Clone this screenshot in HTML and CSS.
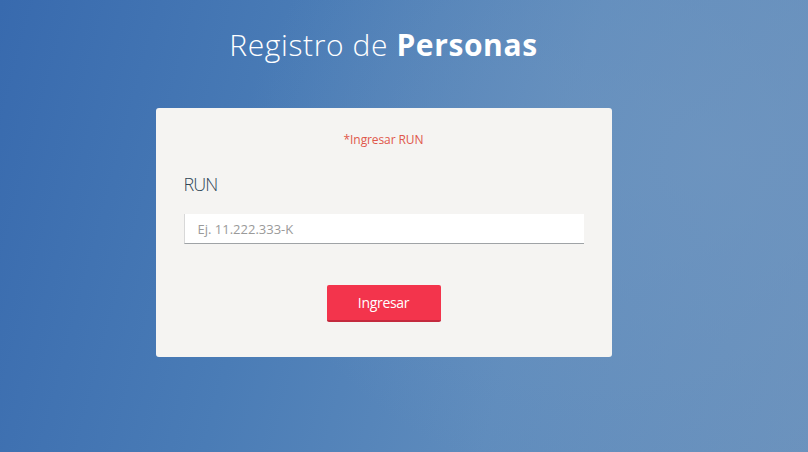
FILE: index.html
```html
<!DOCTYPE html>
<html lang="es">
<head>
    <meta charset="UTF-8">
    <meta name="viewport" content="width=device-width, initial-scale=1.0">
    <title>Registro de Personas</title>
    <link rel="stylesheet" href="styles.css">
</head>
<body>
    <div class="page">
        <h1 class="title">Registro de <strong>Personas</strong></h1>
        <form class="card">
            <p class="error">*Ingresar RUN</p>
            <label class="label" for="run">RUN</label>
            <input class="input" id="run" type="text" placeholder="Ej. 11.222.333-K">
            <div class="actions">
                <button class="btn" type="button">Ingresar</button>
            </div>
        </form>
    </div>
</body>
</html>
```
FILE: styles.css
```css
html, body {
    margin: 0;
    height: 100%;
}
body {
    font-family: "Open Sans", "Noto Sans", sans-serif;
    background:
        radial-gradient(ellipse 60% 80% at 90% 35%, rgba(112, 150, 192, 0.7) 0%, rgba(112, 150, 192, 0) 100%),
        linear-gradient(105deg, #386aae 0%, #4a7cb6 35%, #5f8cbd 65%, #6b92bd 100%);
    overflow: hidden;
}
.page {
    display: flex;
    flex-direction: column;
    align-items: center;
    padding: 25px 41px 0 0;
}
.title {
    margin: 0 0 43px;
    font-size: 30px;
    font-weight: 300;
    line-height: 40px;
    color: #fff;
    letter-spacing: 0.6px;
}
.title strong {
    font-weight: 700;
    letter-spacing: 0.6px;
}
.card {
    width: 456px;
    height: 249px;
    box-sizing: border-box;
    background: #f5f4f2;
    border-radius: 3px;
    padding: 24px 28px 0;
    display: flex;
    flex-direction: column;
}
.error {
    margin: 0;
    text-align: center;
    color: #e0574a;
    font-size: 12px;
    letter-spacing: -0.1px;
    line-height: 16px;
}
.label {
    margin-top: 24px;
    font-size: 18px;
    font-weight: 300;
    color: #2f4656;
    letter-spacing: -1px;
    line-height: 24px;
}
.input {
    margin-top: 18px;
    width: 400px;
    height: 30px;
    box-sizing: border-box;
    border: none;
    border-left: 1px solid #d8d8d8;
    border-bottom: 1px solid #9fa3a6;
    background: #fff;
    padding: 0 13px;
    font-family: inherit;
    font-size: 13px;
    letter-spacing: 0;
    outline: none;
}
.input::placeholder {
    color: #9a9a9a;
}
.actions {
    display: flex;
    justify-content: center;
    margin-top: 41px;
}
.btn {
    width: 114px;
    height: 37px;
    border: none;
    border-bottom: 2px solid #c42a3e;
    border-radius: 2px;
    background: #f3344c;
    color: #fff;
    font-family: inherit;
    font-size: 14px;
    letter-spacing: -0.3px;
}
```
